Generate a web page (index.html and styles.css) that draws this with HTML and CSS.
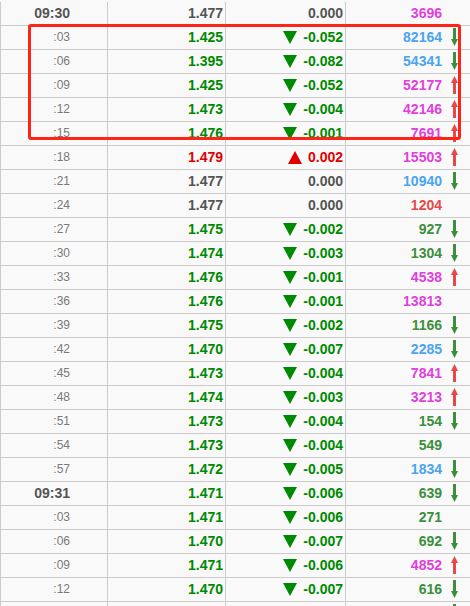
FILE: index.html
```html
<!DOCTYPE html>
<html>
<head>
<meta charset="utf-8">
<link rel="stylesheet" href="styles.css">
</head>
<body>
<div class="sheet">
  <div class="table" id="table"></div>
  <div class="highlight"></div>
</div>
<script>
const rows = [
  ["09:30","1.477","n","0.000","3696","mag",""],
  [":03","1.425","d","-0.052","82164","blu","d"],
  [":06","1.395","d","-0.082","54341","blu","d"],
  [":09","1.425","d","-0.052","52177","mag","u"],
  [":12","1.473","d","-0.004","42146","mag","u"],
  [":15","1.476","d","-0.001","7691","mag","u"],
  [":18","1.479","u","0.002","15503","mag","u"],
  [":21","1.477","n","0.000","10940","blu","d"],
  [":24","1.477","n","0.000","1204","red",""],
  [":27","1.475","d","-0.002","927","grn","d"],
  [":30","1.474","d","-0.003","1304","grn","d"],
  [":33","1.476","d","-0.001","4538","mag","u"],
  [":36","1.476","d","-0.001","13813","mag",""],
  [":39","1.475","d","-0.002","1166","grn","d"],
  [":42","1.470","d","-0.007","2285","blu","d"],
  [":45","1.473","d","-0.004","7841","mag","u"],
  [":48","1.474","d","-0.003","3213","mag","u"],
  [":51","1.473","d","-0.004","154","grn","d"],
  [":54","1.473","d","-0.004","549","grn",""],
  [":57","1.472","d","-0.005","1834","blu","d"],
  ["09:31","1.471","d","-0.006","639","grn","d"],
  [":03","1.471","d","-0.006","271","grn",""],
  [":06","1.470","d","-0.007","692","grn","d"],
  [":09","1.471","d","-0.006","4852","mag","u"],
  [":12","1.470","d","-0.007","616","grn","d"],
  ["","","e","","","grn","d"]
];
const tri = {
  d: '<svg class="tri" width="14" height="13" viewBox="0 0 14 13"><polygon points="0,0 14,0 7,13" fill="#008a00"/></svg>',
  u: '<svg class="tri" width="14" height="13" viewBox="0 0 14 13"><polygon points="0,13 14,13 7,0" fill="#e00000"/></svg>',
  n: '',
  e: ''
};
const arr = {
  d: '<svg class="arrow" width="7" height="18" viewBox="0 0 7 18"><rect x="2" y="0" width="3" height="12" fill="#3c8f3c"/><polygon points="0,11 7,11 3.5,18" fill="#3c8f3c"/></svg>',
  u: '<svg class="arrow" width="7" height="18" viewBox="0 0 7 18"><rect x="2" y="6" width="3" height="12" fill="#e84848"/><polygon points="0,7 7,7 3.5,0" fill="#e84848"/></svg>',
  "": '<span class="arrow"></span>'
};
const t = document.getElementById('table');
let html = '';
rows.forEach(r => {
  const major = r[0].length > 3;
  const cls = r[2] === 'd' ? 'grn' : (r[2] === 'u' ? 'red' : 'gry');
  html += '<div class="row">' +
    '<div class="cell time' + (major ? ' major' : '') + '">' + r[0] + '</div>' +
    '<div class="cell num ' + cls + '">' + r[1] + '</div>' +
    '<div class="cell num chg ' + cls + '">' + tri[r[2]] + (r[3] ? '<span>' + r[3] + '</span>' : '') + '</div>' +
    '<div class="cell vol"><span class="v ' + r[5] + '">' + r[4] + '</span>' + arr[r[6]] + '</div>' +
    '</div>';
});
t.innerHTML = html;
</script>
</body>
</html>
```

FILE: styles.css
```css
html, body {
  margin: 0;
  padding: 0;
  background: #f9f9f9;
  overflow: hidden;
}
.sheet {
  position: relative;
  width: 470px;
  height: 606px;
  overflow: hidden;
  padding-top: 2px;
  box-sizing: border-box;
  font-family: "Liberation Sans", Arial, sans-serif;
}
.table {
  display: flex;
  flex-direction: column;
}
.row {
  display: grid;
  grid-template-columns: 107px 118px 120px 125px;
  height: 24px;
  flex: none;
  box-sizing: border-box;
  border-bottom: 1px solid #cbcbcb;
}
.cell {
  border-left: 1px solid #cbcbcb;
  display: flex;
  align-items: center;
  justify-content: flex-end;
  box-sizing: border-box;
  padding-bottom: 1px;
}
.time {
  padding-right: 37px;
  font-size: 12px;
  color: #7a7a7a;
}
.time.major {
  font-size: 14px;
  font-weight: bold;
  color: #555;
}
.num {
  font-size: 14px;
  font-weight: bold;
  padding-right: 2px;
}
.chg .tri {
  margin-right: 6px;
  margin-top: 1px;
}
.grn { color: #008a00; }
.red { color: #e00000; }
.gry { color: #555; }
.vol {
  padding-right: 12px;
  font-size: 14px;
  font-weight: bold;
}
.v.mag { color: #e040dc; }
.v.blu { color: #4aa4f0; }
.v.grn { color: #3c8f3c; }
.v.red { color: #e84848; }
.arrow {
  display: block;
  width: 7px;
  height: 18px;
  margin-left: 9px;
}
.highlight {
  position: absolute;
  left: 28px;
  top: 24px;
  width: 433px;
  height: 116px;
  border: 3px solid #ff2418;
  border-radius: 3px;
  box-sizing: border-box;
}
```
